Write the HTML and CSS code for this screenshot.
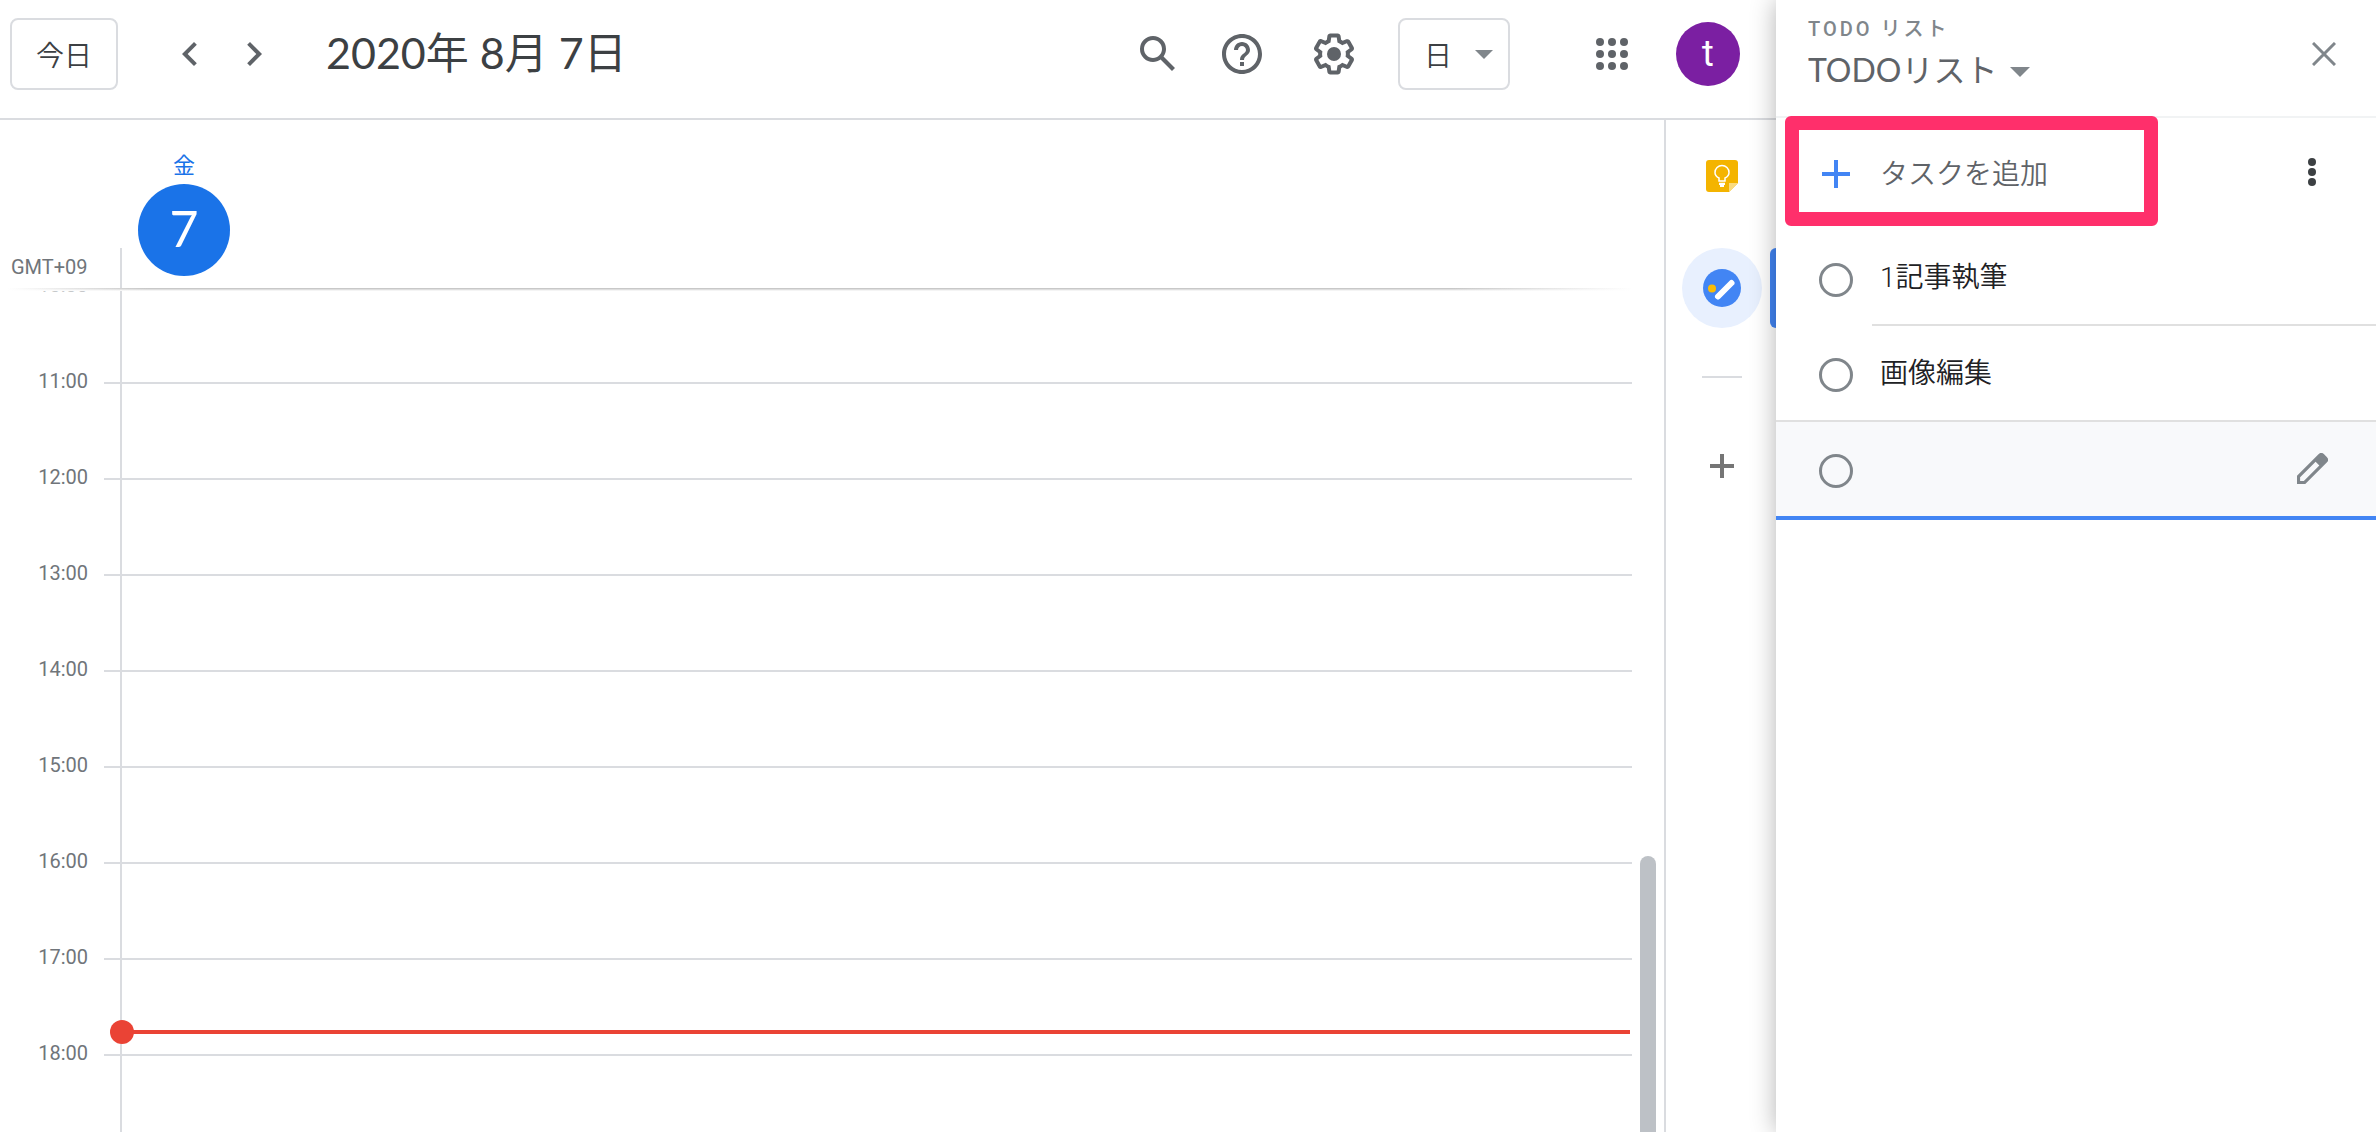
FILE: index.html
```html
<!DOCTYPE html>
<html lang="ja">
<head>
<meta charset="utf-8">
<meta name="viewport" content="width=device-width, initial-scale=1">
<title>カレンダー</title>
<link rel="stylesheet" href="styles.css">
</head>
<body>
<div class="app">
  <main class="main">
    <header class="topbar">
      <button class="btn-outline" type="button">今日</button>
      <div class="pager">
        <button class="icon-btn" type="button" aria-label="前の日">
          <svg class="icon-nav" viewBox="0 0 24 24"><path d="M15.41 7.41L14 6l-6 6 6 6 1.41-1.41L10.83 12z"/></svg>
        </button>
        <button class="icon-btn" type="button" aria-label="次の日">
          <svg class="icon-nav" viewBox="0 0 24 24"><path d="M10 6L8.59 7.41 13.17 12l-4.58 4.59L10 18l6-6z"/></svg>
        </button>
      </div>
      <h1 class="date-title">2020年 8月 7日</h1>
      <div class="tools">
        <div class="tool-pair">
          <button class="icon-btn" type="button" aria-label="検索">
            <svg class="icon" viewBox="0 0 24 24"><path d="M20.49 19l-5.73-5.73C15.53 12.2 16 10.91 16 9.5A6.5 6.5 0 1 0 9.5 16c1.41 0 2.7-.47 3.77-1.24L19 20.49 20.49 19zM5 9.500C5 7.010 7.010 5 9.500 5S14 7.010 14 9.500 11.990 14 9.500 14 5 11.990 5 9.500z"/></svg>
          </button>
          <button class="icon-btn" type="button" aria-label="ヘルプ">
            <svg class="icon" viewBox="0 0 24 24"><path d="M11 18h2v-2h-2v2zm1-16C6.480 2 2 6.480 2 12s4.480 10 10 10 10-4.480 10-10S17.520 2 12 2zm0 18c-4.410 0-8-3.590-8-8s3.590-8 8-8 8 3.590 8 8-3.590 8-8 8zm0-14c-2.210 0-4 1.790-4 4h2c0-1.100.9-2 2-2s2 .9 2 2c0 2-3 1.750-3 5h2c0-2.250 3-2.500 3-5 0-2.210-1.790-4-4-4z"/></svg>
          </button>
        </div>
        <button class="icon-btn" type="button" aria-label="設定">
          <svg class="icon" viewBox="0 0 24 24"><path d="M13.850 22.250h-3.700c-.74 0-1.360-.54-1.450-1.270l-.27-1.890c-.27-.14-.53-.29-.79-.46l-1.800.72c-.7.260-1.470-.03-1.810-.65L2.200 15.530c-.35-.66-.2-1.440.36-1.880l1.530-1.190c-.01-.15-.02-.3-.02-.46 0-.15.010-.31.020-.46l-1.520-1.190c-.59-.45-.74-1.260-.37-1.880l1.850-3.190c.34-.62 1.110-.9 1.790-.63l1.810.73c.26-.17.52-.32.78-.46l.27-1.910c.09-.7.71-1.250 1.440-1.250h3.700c.74 0 1.360.54 1.450 1.270l.27 1.890c.27.14.53.29.79.46l1.800-.72c.71-.26 1.480.03 1.820.65l1.840 3.180c.36.66.2 1.440-.36 1.880l-1.520 1.190c.01.15.020.3.020.46s-.01.31-.02.46l1.520 1.190c.56.45.72 1.230.37 1.860l-1.860 3.220c-.34.62-1.110.9-1.800.63l-1.800-.72c-.26.17-.52.320-.78.460l-.27 1.910c-.1.680-.72 1.220-1.460 1.220zm-3.230-2h2.760l.37-2.550.53-.22c.44-.18.88-.44 1.340-.78l.45-.34 2.380.96 1.380-2.400-2.030-1.580.07-.56c.03-.26.06-.51.060-.78s-.03-.53-.06-.78l-.07-.56 2.030-1.580-1.390-2.400-2.390.96-.45-.35c-.42-.32-.87-.58-1.330-.77l-.52-.22-.37-2.550h-2.760l-.37 2.550-.53.210c-.44.190-.88.440-1.340.790l-.45.330-2.380-.95-1.390 2.390 2.030 1.580-.07.560c-.03.260-.06.530-.06.790s.02.530.060.780l.07.560-2.030 1.580 1.380 2.400 2.390-.96.45.350c.43.330.86.580 1.330.77l.53.220.38 2.550z"/><circle cx="12" cy="12" r="3.500"/></svg>
        </button>
        <div class="select-wrap">
          <select class="view-select" aria-label="表示形式"><option>日</option></select>
          <svg class="caret view-caret" viewBox="0 0 20 10"><path d="M0 0h20L10 10z"/></svg>
        </div>
        <button class="icon-btn apps-btn" type="button" aria-label="アプリ">
          <svg class="icon" viewBox="0 0 24 24"><circle cx="6" cy="6" r="2"/><circle cx="12" cy="6" r="2"/><circle cx="18" cy="6" r="2"/><circle cx="6" cy="12" r="2"/><circle cx="12" cy="12" r="2"/><circle cx="18" cy="12" r="2"/><circle cx="6" cy="18" r="2"/><circle cx="12" cy="18" r="2"/><circle cx="18" cy="18" r="2"/></svg>
        </button>
        <button class="avatar" type="button">t</button>
      </div>
    </header>

    <div class="workspace">
      <section class="calendar">
        <div class="day-header">
          <div class="zone">GMT+09</div>
          <div class="day-cell">
            <div class="day">
              <span class="weekday">金</span>
              <span class="day-number">7</span>
            </div>
          </div>
        </div>
        <div class="timeline">
          <div class="hours">
            <div class="hour hour-past"><span class="time">10:00</span><span class="tick"></span><span class="slot"></span></div>
            <div class="hour"><span class="time">11:00</span><span class="tick"></span><span class="slot"></span></div>
            <div class="hour"><span class="time">12:00</span><span class="tick"></span><span class="slot"></span></div>
            <div class="hour"><span class="time">13:00</span><span class="tick"></span><span class="slot"></span></div>
            <div class="hour"><span class="time">14:00</span><span class="tick"></span><span class="slot"></span></div>
            <div class="hour"><span class="time">15:00</span><span class="tick"></span><span class="slot"></span></div>
            <div class="hour"><span class="time">16:00</span><span class="tick"></span><span class="slot"></span></div>
            <div class="hour"><span class="time">17:00</span><span class="tick"></span><span class="slot"><span class="now"></span></span></div>
            <div class="hour"><span class="time">18:00</span><span class="tick"></span><span class="slot"></span></div>
          </div>
          <div class="edge-shadow"></div>
          <div class="scroll-thumb"></div>
        </div>
      </section>

      <aside class="rail">
        <button class="rail-btn" type="button" aria-label="Keep">
          <svg class="keep" viewBox="0 0 32 32">
            <path fill="#f4b400" d="M3 0h26a3 3 0 0 1 3 3v20l-9 9H3a3 3 0 0 1-3-3V3a3 3 0 0 1 3-3z"/>
            <path fill="#fadb7f" d="M23 23h9l-9 9z"/>
            <path fill="none" stroke="#fff" stroke-width="1.500" d="M13 21v-3c-2.500-1.200-4-3.200-4-5.500a7 7 0 0 1 14 0c0 2.300-1.500 4.300-4 5.500v3zM13 23.500h6"/>
            <path fill="#fff" d="M13 23h6v2h-1v2h-4v-2h-1z"/>
          </svg>
        </button>
        <button class="rail-btn rail-active" type="button" aria-label="ToDo リスト">
          <svg class="tasks" viewBox="0 0 38 38">
            <circle cx="19" cy="19" r="19" fill="#4285f4"/>
            <path stroke="#fff" stroke-width="6" stroke-linecap="round" d="M15 27.500L28.500 14"/>
            <circle cx="9" cy="19.500" r="4" fill="#fbbc04"/>
          </svg>
        </button>
        <hr class="rail-rule">
        <button class="rail-btn" type="button" aria-label="アドオンを取得">
          <svg class="rail-plus" viewBox="0 0 24 24"><path d="M10 0h4v10h10v4H14v10h-4V14H0v-4h10z"/></svg>
        </button>
        <span class="rail-tab"></span>
      </aside>
    </div>
  </main>

  <aside class="panel">
    <header class="panel-head">
      <div class="panel-titles">
        <span class="eyebrow">TODO リスト</span>
        <div class="select-wrap">
          <select class="list-select" aria-label="リスト"><option>TODOリスト</option></select>
          <svg class="caret list-caret" viewBox="0 0 20 10"><path d="M0 0h20L10 10z"/></svg>
        </div>
      </div>
      <button class="icon-btn" type="button" aria-label="閉じる">
        <svg class="close" viewBox="0 0 24 24"><path fill="none" stroke="#80868b" stroke-width="3" d="M1 1l22 22M23 1L1 23"/></svg>
      </button>
    </header>

    <div class="add-row">
      <button class="add-btn" type="button">
        <svg class="add-plus" viewBox="0 0 28 28"><path d="M12 0h4v12h12v4H16v12h-4V16H0v-4h12z"/></svg>
        <span>タスクを追加</span>
      </button>
      <button class="icon-btn" type="button" aria-label="その他">
        <svg class="more" viewBox="0 0 8 28"><circle cx="4" cy="4" r="4"/><circle cx="4" cy="14" r="4"/><circle cx="4" cy="24" r="4"/></svg>
      </button>
      <span class="highlight"></span>
    </div>

    <ul class="task-list">
      <li class="task">
        <input class="task-check" type="checkbox" id="task-1">
        <label class="task-name" for="task-1">1記事執筆</label>
      </li>
      <li class="task">
        <input class="task-check" type="checkbox" id="task-2">
        <label class="task-name" for="task-2">画像編集</label>
      </li>
      <li class="task task-current">
        <input class="task-check" type="checkbox" id="task-3" aria-label="新しいタスク">
        <span class="task-name"></span>
        <button class="icon-btn edit-btn" type="button" aria-label="編集">
          <svg class="pencil" viewBox="0 0 30 30"><path fill-rule="evenodd" d="M28.800 3.800L26.200 1.200a3.800 3.800 0 0 0-5.400 0L0 22v8h8L28.800 9.200a3.800 3.800 0 0 0 0-5.400zM6.600 27H3v-3.600L18 8.400l3.600 3.600z"/></svg>
        </button>
      </li>
    </ul>
  </aside>
</div>
</body>
</html>
```

FILE: styles.css
```css
* {
  box-sizing: border-box;
}

body {
  margin: 0;
  background: #fff;
  color: #3c4043;
  font-family: Roboto, "Noto Sans CJK JP", sans-serif;
  font-size: 28px;
  font-weight: 400;
}

button,
select {
  margin: 0;
  padding: 0;
  border: 0;
  background: none;
  color: inherit;
  font: inherit;
}

svg {
  display: block;
  fill: #5f6368;
}

.app {
  display: flex;
  height: 100vh;
  overflow: hidden;
}

.main {
  display: flex;
  flex: 1;
  flex-direction: column;
  min-width: 0;
}

/* Top bar */

.topbar {
  display: flex;
  flex: none;
  align-items: center;
  height: 120px;
  padding: 0 36px 10px 10px;
  border-bottom: 2px solid #dadce0;
}

.btn-outline {
  width: 108px;
  height: 72px;
  border: 2px solid #dadce0;
  border-radius: 8px;
  font-family: "Noto Sans CJK JP", sans-serif;
  font-weight: 350;
}

.icon-btn {
  display: flex;
  flex: none;
  align-items: center;
  justify-content: center;
}

.icon {
  width: 48px;
  height: 48px;
}

.icon-nav {
  width: 48px;
  height: 48px;
}

.pager {
  display: flex;
  gap: 16px;
  margin-left: 48px;
}

.date-title {
  margin: 0 0 0 48px;
  padding-bottom: 2px;
  font-family: Lato, "Noto Sans CJK JP", sans-serif;
  font-size: 43px;
  font-weight: 400;
  line-height: 56px;
  white-space: nowrap;
}

.tools {
  display: flex;
  align-items: center;
  gap: 40px;
  margin-left: auto;
}

.tool-pair {
  display: flex;
  gap: 36px;
  margin-right: 4px;
}

.select-wrap {
  position: relative;
}

.view-select {
  appearance: none;
  width: 112px;
  height: 72px;
  padding-left: 24px;
  border: 2px solid #dadce0;
  border-radius: 8px;
  font-family: "Noto Sans CJK JP", sans-serif;
  font-weight: 350;
}

.caret {
  position: absolute;
  pointer-events: none;
  fill: #80868b;
}

.view-caret {
  top: 32px;
  right: 17px;
  width: 18px;
  height: 9px;
}

.apps-btn {
  margin-left: 38px;
}

.avatar {
  width: 64px;
  height: 64px;
  border-radius: 50%;
  background: #7b1fa2;
  color: #fff;
  font-size: 36px;
}

/* Calendar */

.workspace {
  display: flex;
  flex: 1;
  min-height: 0;
}

.calendar {
  display: flex;
  flex: 1;
  flex-direction: column;
  min-width: 0;
}

.day-header {
  display: flex;
  flex: none;
  height: 168px;
}

.zone {
  width: 120px;
  padding: 135px 0 0 11px;
  color: #70757a;
  font-size: 20px;
  line-height: 24px;
}

.day-cell {
  flex: 1;
  padding: 30px 0 0 18px;
  background: linear-gradient(#dadce0, #dadce0) left bottom / 2px 40px no-repeat;
}

.day {
  display: flex;
  flex-direction: column;
  align-items: center;
  gap: 2px;
  width: 92px;
}

.weekday {
  color: #1a73e8;
  font-size: 22px;
  line-height: 32px;
}

.day-number {
  width: 92px;
  height: 92px;
  border-radius: 50%;
  background: #1a73e8;
  color: #fff;
  font-family: Lato, sans-serif;
  font-size: 50px;
  line-height: 88px;
  text-align: center;
}

.timeline {
  position: relative;
  display: flex;
  flex: 1;
  gap: 8px;
  min-height: 0;
  padding-right: 8px;
  overflow: hidden;
}

.hours {
  flex: 1;
  margin-top: -2px;
}

.hour {
  display: flex;
  height: 96px;
}

.time {
  width: 104px;
  height: 24px;
  margin-top: -13px;
  padding-right: 16px;
  color: #70757a;
  font-size: 20px;
  line-height: 24px;
  text-align: right;
}

.hour-past .time {
  color: #c6c8ca;
}

.tick {
  width: 16px;
  border-top: 2px solid #dadce0;
}

.slot {
  position: relative;
  flex: 1;
  border-top: 2px solid #dadce0;
  border-left: 2px solid #dadce0;
}

.hour-past .tick,
.hour-past .slot {
  border-top-color: transparent;
}

.now {
  position: absolute;
  top: 70px;
  right: 2px;
  left: 0;
  height: 4px;
  background: #ea4335;
}

.now::before {
  content: "";
  position: absolute;
  top: -10px;
  left: -12px;
  width: 24px;
  height: 24px;
  border-radius: 50%;
  background: #ea4335;
}

.edge-shadow {
  position: absolute;
  top: 0;
  right: 32px;
  left: 8px;
  height: 3px;
  background:
    linear-gradient(transparent, #fff),
    linear-gradient(90deg, #fff, #bdbdbd 140px, #bdbdbd calc(100% - 180px), #fff);
}

.scroll-thumb {
  align-self: flex-end;
  width: 16px;
  height: 276px;
  border-radius: 8px 8px 0 0;
  background: #bdc1c6;
}

/* Side rail */

.rail {
  position: relative;
  display: flex;
  flex: none;
  flex-direction: column;
  align-items: center;
  width: 112px;
  padding: 16px 0 0 2px;
  border-left: 2px solid #dadce0;
}

.rail-btn {
  display: flex;
  align-items: center;
  justify-content: center;
  width: 80px;
  height: 80px;
  margin-bottom: 32px;
  border-radius: 50%;
}

.rail-active {
  margin-bottom: 48px;
  background: #e8f0fe;
}

.rail-rule {
  width: 40px;
  height: 2px;
  margin: 0 0 48px;
  border: 0;
  background: #dadce0;
}

.keep {
  width: 32px;
  height: 32px;
}

.tasks {
  width: 38px;
  height: 38px;
}

.rail-plus {
  width: 24px;
  height: 24px;
  fill: #757575;
}

.rail-tab {
  position: absolute;
  top: 128px;
  right: 0;
  width: 6px;
  height: 80px;
  border-radius: 6px 0 0 6px;
  background: #4285f4;
}

/* Task panel */

.panel {
  position: relative;
  flex: none;
  width: 600px;
  background: #fff;
  box-shadow: 0 0 24px rgba(0, 0, 0, 0.3);
}

.panel-head {
  display: flex;
  align-items: center;
  justify-content: space-between;
  height: 118px;
  padding: 0 40px 8px 32px;
  border-bottom: 2px solid #f1f3f4;
}

.panel-titles {
  display: flex;
  flex-direction: column;
  align-items: flex-start;
  gap: 6px;
}

.eyebrow {
  color: #80868b;
  font-size: 20px;
  font-weight: 500;
  letter-spacing: 3px;
  line-height: 24px;
}

.list-select {
  appearance: none;
  display: block;
  height: 44px;
  padding-right: 40px;
  color: #5f6368;
  font-family: Lato, "Noto Sans CJK JP", sans-serif;
  font-size: 32px;
}

.list-caret {
  top: 20px;
  right: 8px;
  width: 20px;
  height: 10px;
}

.close {
  width: 24px;
  height: 24px;
}

.add-row {
  position: relative;
  display: flex;
  align-items: center;
  justify-content: space-between;
  height: 112px;
  padding: 0 60px 0 46px;
}

.add-btn {
  display: flex;
  align-items: center;
  gap: 30px;
  color: #5f6368;
  font-family: "Noto Sans CJK JP", sans-serif;
  font-weight: 350;
}

.add-btn span {
  padding-bottom: 4px;
}

.add-btn span,
.task-name {
  line-height: 40px;
}

.add-plus {
  width: 28px;
  height: 28px;
  fill: #4285f4;
}

.more {
  width: 8px;
  height: 28px;
  margin-bottom: 4px;
  fill: #3c4043;
}

.highlight {
  position: absolute;
  top: -2px;
  left: 9px;
  width: 373px;
  height: 110px;
  border: 14px solid #ff2f6b;
  border-radius: 6px;
  pointer-events: none;
}

.task-list {
  margin: 0;
  padding: 0;
  list-style: none;
}

.task {
  display: flex;
  align-items: center;
  height: 96px;
  padding-left: 43px;
}

.task-check {
  appearance: none;
  flex: none;
  width: 34px;
  height: 34px;
  margin: 4px 19px 0 0;
  border: 3px solid #80868b;
  border-radius: 50%;
}

.task-name {
  flex: 1;
  align-self: stretch;
  padding: 28px 0 0 8px;
  border-bottom: 2px solid #e0e0e0;
  color: #202124;
  font-weight: 350;
}

.task:nth-child(2) {
  border-bottom: 2px solid #e0e0e0;
}

.task:nth-child(2) .task-name,
.task-current .task-name {
  border-bottom: 0;
}

.task-current {
  height: 98px;
  border-bottom: 4px solid #4285f4;
  background: #f8f9fb;
}

.edit-btn {
  margin: 0 48px 2px 0;
}

.pencil {
  width: 31px;
  height: 31px;
  fill: #80868b;
}
```
